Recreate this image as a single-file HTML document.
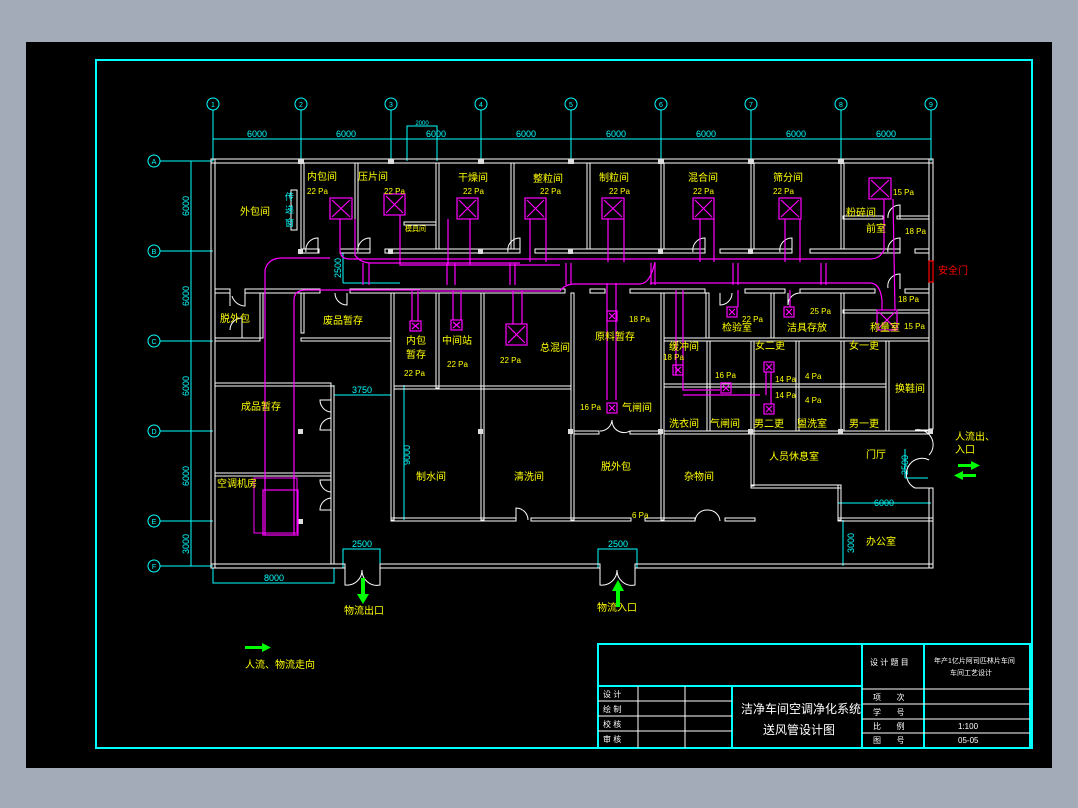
<!DOCTYPE html>
<html><head><meta charset="utf-8"><style>
html,body{margin:0;padding:0;background:#a4abb8;}
svg{display:block}
text{font-family:"Liberation Sans","Noto Sans CJK SC",sans-serif;}
.y{fill:#ffff00;font-size:10px}
.c{fill:#00ffff;font-size:9px}
.w{fill:none;stroke:#fff;stroke-width:1}
.d{fill:none;stroke:#ff00ff;stroke-width:1.2}
.g{stroke:#00ffff;stroke-width:1;fill:none}
.t{fill:#fff;font-size:8px}
</style></head><body>
<svg width="1078" height="808" viewBox="0 0 1078 808" xmlns="http://www.w3.org/2000/svg">
<rect x="0" y="0" width="1078" height="808" fill="#a4abb8"/>
<rect x="26" y="42" width="1026" height="726" fill="#000"/>
<rect x="96" y="60" width="936" height="688" fill="none" stroke="#00ffff" stroke-width="2"/>

<!-- grid -->
<g class="g">
<circle cx="213" cy="104" r="6"/><circle cx="301" cy="104" r="6"/><circle cx="391" cy="104" r="6"/><circle cx="481" cy="104" r="6"/><circle cx="571" cy="104" r="6"/><circle cx="661" cy="104" r="6"/><circle cx="751" cy="104" r="6"/><circle cx="841" cy="104" r="6"/><circle cx="931" cy="104" r="6"/>
<path d="M213 110V161M301 110V161M391 110V161M481 110V161M571 110V161M661 110V161M751 110V161M841 110V161M931 110V161"/>
<path d="M213 139H931"/>
<circle cx="154" cy="161" r="6"/><circle cx="154" cy="251" r="6"/><circle cx="154" cy="341" r="6"/><circle cx="154" cy="431" r="6"/><circle cx="154" cy="521" r="6"/><circle cx="154" cy="566" r="6"/>
<path d="M160 161H213M160 251H213M160 341H213M160 431H213M160 521H213M160 566H213"/>
<path d="M191 161V566"/>
<path d="M407 161V126H437V161"/>
<path d="M343 253V283M343 283H400"/>
<path d="M334 385V395H391V385"/>
<path d="M404 385V520"/>
<path d="M213 568V583H334V568"/>
<path d="M343 568V549H380V568M598 568V549H637V568"/>
<path d="M838 520V503H931"/>
<path d="M843 520V566"/>
<path d="M905 478H928M905 478V449"/>
</g>
<g class="c" text-anchor="middle">
<text x="213" y="107" font-size="7">1</text><text x="301" y="107" font-size="7">2</text><text x="391" y="107" font-size="7">3</text><text x="481" y="107" font-size="7">4</text><text x="571" y="107" font-size="7">5</text><text x="661" y="107" font-size="7">6</text><text x="751" y="107" font-size="7">7</text><text x="841" y="107" font-size="7">8</text><text x="931" y="107" font-size="7">9</text>
<text x="154" y="164" font-size="7">A</text><text x="154" y="254" font-size="7">B</text><text x="154" y="344" font-size="7">C</text><text x="154" y="434" font-size="7">D</text><text x="154" y="524" font-size="7">E</text><text x="154" y="569" font-size="7">F</text>
<text x="257" y="137">6000</text><text x="346" y="137">6000</text><text x="436" y="137">6000</text><text x="526" y="137">6000</text><text x="616" y="137">6000</text><text x="706" y="137">6000</text><text x="796" y="137">6000</text><text x="886" y="137">6000</text>
<text x="422" y="125" font-size="6">2000</text>
<text x="362" y="393">3750</text><text x="274" y="581">8000</text><text x="362" y="547">2500</text><text x="618" y="547">2500</text><text x="884" y="506">6000</text>
<text transform="translate(189,206) rotate(-90)">6000</text><text transform="translate(189,296) rotate(-90)">6000</text><text transform="translate(189,386) rotate(-90)">6000</text><text transform="translate(189,476) rotate(-90)">6000</text><text transform="translate(189,544) rotate(-90)">3000</text>
<text transform="translate(341,268) rotate(-90)">2500</text><text transform="translate(410,455) rotate(-90)">9000</text><text transform="translate(854,543) rotate(-90)">3000</text><text transform="translate(908,465) rotate(-90)">2500</text>
</g>

<!-- walls -->
<g class="w">
<rect x="211" y="159" width="722" height="4"/>
<rect x="211" y="564" width="134" height="4"/><rect x="380" y="564" width="220" height="4"/><rect x="635" y="564" width="298" height="4"/>
<rect x="211" y="159" width="4" height="409"/>
<rect x="929" y="159" width="4" height="270"/><rect x="929" y="488" width="4" height="80"/>
<rect x="301" y="249" width="18" height="4"/><rect x="340" y="249" width="30" height="4"/><rect x="385" y="249" width="135" height="4"/><rect x="535" y="249" width="170" height="4"/><rect x="720" y="249" width="72" height="4"/><rect x="810" y="249" width="90" height="4"/><rect x="915" y="249" width="14" height="4"/>
<rect x="215" y="289" width="15" height="4"/><rect x="245" y="289" width="75" height="4"/><rect x="350" y="289" width="215" height="4"/><rect x="590" y="289" width="15" height="4"/><rect x="630" y="289" width="75" height="4"/><rect x="745" y="289" width="40" height="4"/><rect x="800" y="289" width="75" height="4"/><rect x="905" y="289" width="24" height="4"/>
<rect x="301" y="163" width="3" height="86"/><rect x="355" y="163" width="3" height="86"/><rect x="436" y="163" width="3" height="86"/><rect x="511" y="163" width="3" height="86"/><rect x="587" y="163" width="3" height="86"/><rect x="661" y="163" width="3" height="86"/><rect x="751" y="163" width="3" height="86"/><rect x="841" y="163" width="3" height="86"/>
<rect x="404" y="222" width="32" height="3"/>
<rect x="843" y="216" width="40" height="3"/><rect x="897" y="216" width="32" height="3"/>
<rect x="260" y="293" width="3" height="45"/><rect x="301" y="293" width="3" height="40"/>
<rect x="215" y="338" width="45" height="3"/><rect x="301" y="338" width="90" height="3"/>
<rect x="215" y="383" width="116" height="3"/><rect x="391" y="293" width="3" height="227"/><rect x="436" y="293" width="3" height="95"/><rect x="481" y="293" width="3" height="227"/><rect x="571" y="293" width="3" height="227"/><rect x="661" y="293" width="3" height="227"/>
<rect x="394" y="386" width="177" height="3"/>
<rect x="331" y="386" width="3" height="178"/>
<rect x="215" y="473" width="116" height="3"/>
<rect x="391" y="518" width="125" height="3"/><rect x="531" y="518" width="100" height="3"/><rect x="645" y="518" width="50" height="3"/><rect x="725" y="518" width="30" height="3"/>
<rect x="574" y="431" width="25" height="3"/><rect x="630" y="431" width="30" height="3"/><rect x="664" y="431" width="265" height="3"/>
<rect x="664" y="338" width="265" height="3"/>
<rect x="706" y="293" width="3" height="45"/><rect x="771" y="293" width="3" height="45"/><rect x="841" y="293" width="3" height="45"/>
<rect x="843" y="310" width="86" height="3"/>
<rect x="707" y="341" width="3" height="90"/><rect x="751" y="341" width="3" height="145"/><rect x="796" y="341" width="3" height="90"/><rect x="841" y="341" width="3" height="90"/><rect x="886" y="341" width="3" height="90"/>
<rect x="664" y="384" width="222" height="3"/>
<rect x="751" y="485" width="90" height="3"/><rect x="838" y="485" width="3" height="35"/>
<rect x="838" y="518" width="95" height="3"/>
<rect x="291" y="190" width="6" height="40"/>
</g>
<g fill="#ddd">
<rect x="298" y="159" width="6" height="5"/><rect x="388" y="159" width="6" height="5"/><rect x="478" y="159" width="6" height="5"/><rect x="568" y="159" width="6" height="5"/><rect x="658" y="159" width="6" height="5"/><rect x="748" y="159" width="6" height="5"/><rect x="838" y="159" width="6" height="5"/>
<rect x="298" y="249" width="5" height="5"/><rect x="388" y="249" width="5" height="5"/><rect x="478" y="249" width="5" height="5"/><rect x="568" y="249" width="5" height="5"/><rect x="658" y="249" width="5" height="5"/><rect x="748" y="249" width="5" height="5"/>
<rect x="298" y="429" width="5" height="5"/><rect x="298" y="519" width="5" height="5"/>
<rect x="478" y="429" width="5" height="5"/><rect x="568" y="429" width="5" height="5"/><rect x="658" y="429" width="5" height="5"/><rect x="748" y="429" width="5" height="5"/><rect x="838" y="429" width="5" height="5"/><rect x="928" y="429" width="5" height="5"/>
</g>
<!-- doors (arcs) -->
<g class="w">
<path d="M318 253V238A12 12 0 0 0 306 252M370 253V238A12 12 0 0 0 358 252M520 253V238A12 12 0 0 0 508 252M705 253V238A12 12 0 0 0 693 252M792 253V238A12 12 0 0 0 780 252M900 253V238A12 12 0 0 0 888 252M900 219V205A12 12 0 0 0 888 218M900 289V274A12 12 0 0 0 888 288"/>
<path d="M230 293V306M245 293V306A14 14 0 0 1 232 296"/>
<path d="M230 330A12 12 0 0 1 242 318V338"/>
<path d="M335 293A12 12 0 0 0 347 305V293"/>
<path d="M331 400H320A12 12 0 0 0 331 412M331 418A12 12 0 0 0 320 430H331M331 480H320A12 12 0 0 0 331 492M331 498A12 12 0 0 0 320 510H331"/>
<path d="M345 568V585A15 15 0 0 0 362 570A15 15 0 0 0 380 585V568M600 568V585A15 15 0 0 0 617 570A15 15 0 0 0 635 585V568"/>
<path d="M516 521V508A12 12 0 0 1 528 520M600 431A12 12 0 0 0 612 420A12 12 0 0 0 630 431M695 521A12 12 0 0 1 708 510A12 12 0 0 1 720 521"/>
<path d="M929 430H915A15 15 0 0 1 929 455M929 460A15 15 0 0 0 915 488H929"/>
<path d="M720 293V305A12 12 0 0 0 732 293M800 293A12 12 0 0 0 788 305V293"/>
</g>
<!-- ducts -->
<g class="d">
<path d="M265 535V270Q268 258 282 258H330M294 535V300Q294 290 306 290H420"/>
<path d="M340 219V250Q340 259 350 259H870Q880 259 884 250V199M355 219V255Q360 263 372 263H520"/>
<path d="M400 215V265H560M448 219V265M470 219V265M530 219V262M546 219V262M608 219V262M624 219V262M700 219V262M714 219V262M785 219V262M800 219V262"/>
<path d="M420 291H560Q565 284 575 284H600M600 284H640Q650 284 655 262M650 283H870Q880 283 882 300V310M893 199L895 310"/>
<path d="M363 263V285M369 263V285M447 263V285M455 263V285M510 263V285M515 263V285M566 263V285M571 263V285M651 263V285M655 263V285M733 263V285M738 263V285M821 263V285M826 263V285"/>
<path d="M412 291V321M418 291V321M453 291V320M461 291V320M513 291V324M522 291V324M607 283V400M616 283V400"/>
<path d="M676 290V375M683 290V390H720M683 395H760M738 290V307M790 290V307M766 372V395M771 372V404"/>
<rect x="263" y="490" width="35" height="45"/><rect x="254" y="478" width="43" height="55" stroke-width="1"/>
</g>
<g fill="none" stroke="#ff00ff" stroke-width="1.2">
<rect x="330" y="198" width="22" height="21"/><path d="M332 200L350 217M350 200L332 217"/>
<rect x="384" y="194" width="21" height="21"/><path d="M386 196L403 213M403 196L386 213"/>
<rect x="457" y="198" width="21" height="21"/><path d="M459 200L476 217M476 200L459 217"/>
<rect x="525" y="198" width="21" height="21"/><path d="M527 200L544 217M544 200L527 217"/>
<rect x="602" y="198" width="22" height="21"/><path d="M604 200L622 217M622 200L604 217"/>
<rect x="693" y="198" width="21" height="21"/><path d="M695 200L712 217M712 200L695 217"/>
<rect x="779" y="198" width="22" height="21"/><path d="M781 200L799 217M799 200L781 217"/>
<rect x="869" y="178" width="22" height="21"/><path d="M871 180L889 197M889 180L871 197"/>
<rect x="506" y="324" width="21" height="21"/><path d="M508 326L525 343M525 326L508 343"/>
<rect x="877" y="310" width="20" height="20"/><path d="M879 312L895 328M895 312L879 328"/>
<rect x="410" y="321" width="11" height="10"/><path d="M412 323L419 329M419 323L412 329"/>
<rect x="451" y="320" width="11" height="10"/><path d="M453 322L460 328M460 322L453 328"/>
<rect x="607" y="311" width="10" height="10"/><path d="M609 313L615 319M615 313L609 319"/>
<rect x="607" y="403" width="10" height="10"/><path d="M609 405L615 411M615 405L609 411"/>
<rect x="727" y="307" width="10" height="10"/><path d="M729 309L735 315M735 309L729 315"/>
<rect x="784" y="307" width="10" height="10"/><path d="M786 309L792 315M792 309L786 315"/>
<rect x="673" y="365" width="10" height="10"/><path d="M675 367L681 373M681 367L675 373"/>
<rect x="721" y="383" width="10" height="10"/><path d="M723 385L729 391M729 385L723 391"/>
<rect x="764" y="362" width="10" height="10"/><path d="M766 364L772 370M772 364L766 370"/>
<rect x="764" y="404" width="10" height="10"/><path d="M766 406L772 412M772 406L766 412"/>
</g>
<rect x="929" y="261" width="4" height="21" fill="none" stroke="#ff0000" stroke-width="1.2"/>

<!-- labels -->
<g class="y">
<text x="307" y="180">内包间</text><text x="307" y="194" font-size="8">22 Pa</text>
<text x="358" y="180">压片间</text><text x="384" y="194" font-size="8">22 Pa</text>
<text x="458" y="181">干燥间</text><text x="463" y="194" font-size="8">22 Pa</text>
<text x="533" y="182">整粒间</text><text x="540" y="194" font-size="8">22 Pa</text>
<text x="599" y="181">制粒间</text><text x="609" y="194" font-size="8">22 Pa</text>
<text x="688" y="181">混合间</text><text x="693" y="194" font-size="8">22 Pa</text>
<text x="773" y="181">筛分间</text><text x="773" y="194" font-size="8">22 Pa</text>
<text x="893" y="195" font-size="8">15 Pa</text><text x="846" y="216">粉碎间</text><text x="866" y="232">前室</text><text x="905" y="234" font-size="8">18 Pa</text>
<text x="240" y="215">外包间</text><text x="405" y="231" font-size="7">模具间</text>
<text x="220" y="322">脱外包</text><text x="323" y="324">废品暂存</text>
<text x="406" y="344">内包</text><text x="406" y="358">暂存</text><text x="404" y="376" font-size="8">22 Pa</text>
<text x="442" y="344">中间站</text><text x="447" y="367" font-size="8">22 Pa</text>
<text x="500" y="363" font-size="8">22 Pa</text><text x="540" y="351">总混间</text>
<text x="595" y="340">原料暂存</text><text x="629" y="322" font-size="8">18 Pa</text>
<text x="742" y="322" font-size="8">22 Pa</text><text x="810" y="314" font-size="8">25 Pa</text>
<text x="722" y="331">检验室</text><text x="787" y="331">洁具存放</text><text x="870" y="331">称量室</text>
<text x="898" y="302" font-size="8">18 Pa</text><text x="904" y="329" font-size="8">15 Pa</text>
<text x="669" y="350">缓冲间</text><text x="663" y="360" font-size="8">18 Pa</text>
<text x="755" y="349">女二更</text><text x="849" y="349">女一更</text>
<text x="715" y="378" font-size="8">16 Pa</text><text x="775" y="382" font-size="8">14 Pa</text><text x="775" y="398" font-size="8">14 Pa</text>
<text x="805" y="379" font-size="8">4 Pa</text><text x="805" y="403" font-size="8">4 Pa</text>
<text x="895" y="392">换鞋间</text>
<text x="580" y="410" font-size="8">16 Pa</text><text x="622" y="411">气闸间</text>
<text x="669" y="427">洗衣间</text><text x="710" y="427">气闸间</text><text x="754" y="427">男二更</text><text x="797" y="427">盥洗室</text><text x="849" y="427">男一更</text>
<text x="241" y="410">成品暂存</text><text x="217" y="487">空调机房</text>
<text x="416" y="480">制水间</text><text x="514" y="480">清洗间</text><text x="601" y="470">脱外包</text><text x="684" y="480">杂物间</text>
<text x="769" y="460">人员休息室</text><text x="866" y="458">门厅</text><text x="632" y="518" font-size="8">6 Pa</text>
<text x="866" y="545">办公室</text>
<text x="955" y="440">人流出、</text><text x="955" y="453">入口</text>
<text x="344" y="614">物流出口</text><text x="597" y="611">物流入口</text>
<text x="245" y="668">人流、物流走向</text>
</g>
<text x="285" y="200" fill="#00ffff" font-size="9">传</text><text x="285" y="213" fill="#00ffff" font-size="9">递</text><text x="285" y="226" fill="#00ffff" font-size="9">窗</text>
<text x="938" y="274" fill="#ff0000" font-size="10" font-family="Liberation Sans,Noto Sans CJK SC,sans-serif">安全门</text>
<!-- green arrows -->
<g fill="#00ff00">
<rect x="361" y="578" width="4" height="17"/><path d="M357 594H369L363 604Z"/>
<rect x="616" y="590" width="4" height="17"/><path d="M612 591H624L618 580Z"/>
<rect x="245" y="646" width="18" height="3"/><path d="M262 643V652L271 647.5Z"/>
<rect x="958" y="464" width="14" height="3"/><path d="M971 461V470L980 465.5Z"/>
<rect x="962" y="474" width="14" height="3"/><path d="M963 471V480L954 475.5Z"/>
</g>

<!-- title block -->
<g stroke="#00ffff" stroke-width="2" fill="none">
<rect x="598" y="644" width="432" height="104"/>
<path d="M598 686H862M862 644V748M924 644V748M732 686V748"/>
</g>
<g stroke="#fff" stroke-width="1">
<path d="M598 701H732M598 716H732M598 731H732M638 686V748M685 686V748"/>
<path d="M862 689H1030M862 704H1030M862 719H1030M862 733H1030"/>
</g>
<g class="t">
<text x="603" y="697">设 计</text><text x="603" y="712">绘 制</text><text x="603" y="727">校 核</text><text x="603" y="742">审 核</text>
<text x="870" y="665">设 计 题 目</text><text x="873" y="700">项 &#160;&#160;&#160;&#160;&#160;&#160;次</text><text x="873" y="715">学 &#160;&#160;&#160;&#160;&#160;&#160;号</text><text x="873" y="729">比 &#160;&#160;&#160;&#160;&#160;&#160;例</text><text x="873" y="743">图 &#160;&#160;&#160;&#160;&#160;&#160;号</text>
<text x="934" y="663" font-size="7">年产1亿片阿司匹林片车间</text><text x="950" y="675" font-size="7">车间工艺设计</text>
<text x="958" y="729">1:100</text><text x="958" y="743">05-05</text>
</g>
<text x="741" y="713" fill="#fff" font-size="12" font-family="Liberation Sans,Noto Sans CJK SC,sans-serif">洁净车间空调净化系统</text>
<text x="763" y="734" fill="#fff" font-size="12" font-family="Liberation Sans,Noto Sans CJK SC,sans-serif">送风管设计图</text>
</svg>
</body></html>
